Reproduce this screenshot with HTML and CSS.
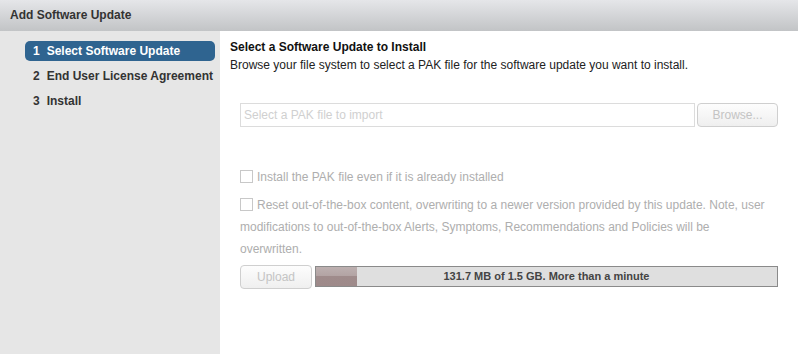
FILE: index.html
```html
<!DOCTYPE html>
<html lang="en">
  <head>
    <meta charset="utf-8">
    <title>Add Software Update</title>
    <link rel="stylesheet" href="styles.css">
  </head>
  <body>
    <div class="dialog">
      <div class="titlebar">Add Software Update</div>
      <div class="dialog-body">
        <ul class="steps">
          <li class="step active"><span class="num">1</span>Select Software Update</li>
          <li class="step"><span class="num">2</span>End User License Agreement</li>
          <li class="step"><span class="num">3</span>Install</li>
        </ul>
        <div class="main">
          <h2>Select a Software Update to Install</h2>
          <p class="intro">Browse your file system to select a PAK file for the software update you want to install.</p>

          <div class="form">
            <div class="file-row">
              <div class="file-input">Select a PAK file to import</div>
              <button class="btn" disabled>Browse...</button>
            </div>

            <div class="options">
              <label class="option"><span class="check"></span>Install the PAK file even if it is already installed</label>
              <label class="option"><span class="check"></span>Reset out-of-the-box content, overwriting to a newer version provided by this update. Note, user modifications to out-of-the-box Alerts, Symptoms, Recommendations and Policies will be overwritten.</label>
            </div>

            <div class="upload-row">
              <button class="btn upload" disabled>Upload</button>
              <div class="progress">
                <div class="progress-fill" style="width: 9%"></div>
                <div class="progress-text">131.7 MB of 1.5 GB. More than a minute</div>
              </div>
            </div>
          </div>
        </div>
      </div>
    </div>
  </body>
</html>
```

FILE: styles.css
```css
html, body {
  margin: 0;
  padding: 0;
}
body {
  font-family: "Liberation Sans", Arial, sans-serif;
  font-size: 12px;
  color: #222;
  background: #fff;
}
.dialog {
  display: flex;
  flex-direction: column;
  height: 354px;
}
.titlebar {
  height: 31px;
  line-height: 31px;
  padding-left: 10px;
  font-weight: bold;
  color: #333;
  background: linear-gradient(to bottom, #e5e6e9, #c2c4c6);
}
.dialog-body {
  flex: 1;
  display: flex;
}
.steps {
  width: 220px;
  box-sizing: border-box;
  margin: 0;
  padding: 10px 5px 0 25px;
  list-style: none;
  background: #e6e6e6;
}
.step {
  height: 20px;
  line-height: 20px;
  margin-bottom: 5px;
  padding-left: 8px;
  font-weight: bold;
  color: #333;
  white-space: nowrap;
}
.step .num {
  margin-right: 7px;
}
.step.active {
  background: #2f6490;
  color: #fff;
  border-radius: 5px;
}
.main {
  flex: 1;
  padding: 7px 20px 0 10px;
}
h2 {
  margin: 0;
  font-size: 12px;
  line-height: 18px;
  color: #111;
}
.intro {
  margin: 0;
  line-height: 18px;
  color: #222;
}
.form {
  margin: 29px 0 0 10px;
}
.file-row {
  display: flex;
  gap: 2px;
}
.file-input {
  flex: 1;
  height: 22px;
  line-height: 22px;
  padding-left: 3px;
  border: 1px solid #dcdcdc;
  color: #d0d0d0;
}
.btn {
  font-family: inherit;
  font-size: 12px;
  color: #c4c4c4;
  background: linear-gradient(to bottom, #fdfdfd, #efefef);
  border: 1px solid #cfcfcf;
  border-radius: 4px;
  padding: 0;
}
.file-row .btn {
  width: 81px;
  height: 24px;
}
.options {
  margin-top: 39px;
  padding-right: 9px;
  display: flex;
  flex-direction: column;
  gap: 6px;
  color: #aeaeae;
  line-height: 22px;
}
.option {
  display: block;
}
.check {
  display: inline-block;
  width: 11px;
  height: 11px;
  border: 1px solid #c8c8c8;
  background: #fff;
  margin-right: 4px;
  vertical-align: -2px;
}
.upload-row {
  display: flex;
  gap: 3px;
  margin-top: 5px;
}
.btn.upload {
  width: 72px;
  height: 24px;
}
.progress {
  position: relative;
  flex: 1;
  height: 19px;
  margin-top: 1px;
  border: 1px solid #8a8a8a;
  background: #dfdfdf;
}
.progress-fill {
  height: 100%;
  background: linear-gradient(to bottom, #bdb0b0 0%, #b3a4a4 45%, #9f8b8b 50%, #9e8a8a 100%);
}
.progress-text {
  position: absolute;
  inset: 0;
  text-align: center;
  line-height: 19px;
  font-size: 11px;
  font-weight: bold;
  color: #444;
}
```
